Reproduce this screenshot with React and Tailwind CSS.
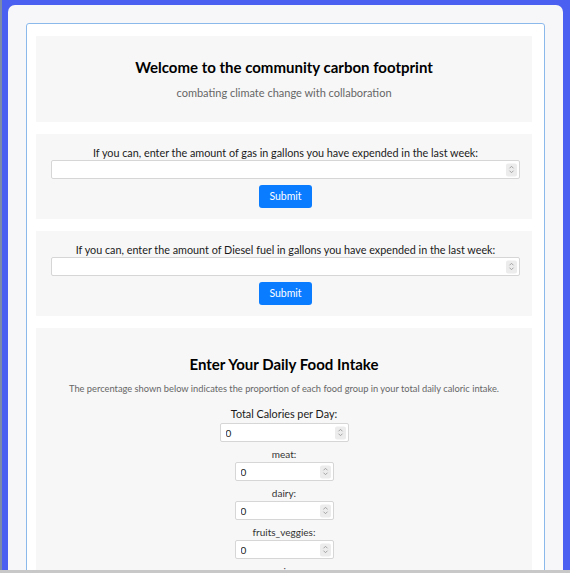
import React from "react";

function Spin() {
  return (
    <span className="pointer-events-none absolute right-[3px] top-1/2 flex h-[13px] w-[11px] -translate-y-1/2 items-center justify-center rounded-[2px] bg-[#ececec]">
      <svg width="7" height="10" viewBox="0 0 7 10" fill="none" stroke="#9a9a9a" strokeWidth="0.9">
        <path d="M1.5 3.8 L3.5 1.8 L5.5 3.8" />
        <path d="M1.5 6.2 L3.5 8.2 L5.5 6.2" />
      </svg>
    </span>
  );
}

function NumInput({ className, value = "" }) {
  return (
    <div className={"relative " + className}>
      <input
        type="text"
        defaultValue={value}
        className="block h-full w-full rounded-[2px] border border-[#d6d6d6] bg-white pl-[5px] text-[10px] text-[#222] outline-none"
      />
      <Spin />
    </div>
  );
}

function FuelSection({ label }) {
  return (
    <div className="flex h-[85px] flex-col items-center bg-[#f7f7f7] pl-[15px] pr-[12px] pt-[11px]">
      <div className="text-[10.8px] leading-[15px] text-[#1a1a1a]">{label}</div>
      <NumInput className="h-[19px] w-full" />
      <button className="mt-[6px] h-[23px] w-[53px] rounded-[3px] bg-[#0a7cff] text-[10.5px] text-white">
        Submit
      </button>
    </div>
  );
}

function FoodField({ label, wide }) {
  return (
    <div className="flex flex-col items-center">
      <div className={wide ? "text-[10.8px] leading-[16px] text-[#1a1a1a]" : "text-[10px] leading-[14px] text-[#333]"}>
        {label}
      </div>
      <NumInput value="0" className={wide ? "mt-[1px] h-[19px] w-[129px]" : "mt-[1px] h-[19px] w-[99px]"} />
    </div>
  );
}

export default function App() {
  return (
    <div
      className="flex h-[573px] w-[570px] flex-col overflow-hidden bg-[#4b5ff0]"
      style={{ fontFamily: 'Lato, "Noto Sans", sans-serif' }}
    >
      <div className="flex min-h-0 flex-1">
        <div className="w-[2px] bg-[#7d8aa8]" />
        <div className="flex min-h-0 min-w-0 flex-1 pl-[6px] pr-[7px] pt-[5px]">
          <div className="min-h-0 min-w-0 flex-1 overflow-hidden rounded-t-[7px] bg-[#f7f7f9] px-[18px] pt-[18px]">
            <div className="flex h-[600px] flex-col gap-[12px] rounded-[3px] border border-[#8cb9ec] bg-white pl-[9px] pr-[12px] pt-[12px]">
              <div className="flex h-[86px] flex-col items-center bg-[#f7f7f7] pt-[21px]">
                <div className="text-[15px] font-bold leading-[20px] text-black">
                  Welcome to the community carbon footprint
                </div>
                <div className="mt-[8px] text-[11px] leading-[15px] text-[#666]">
                  combating climate change with collaboration
                </div>
              </div>
              <FuelSection label="If you can, enter the amount of gas in gallons you have expended in the last week:" />
              <FuelSection label="If you can, enter the amount of Diesel fuel in gallons you have expended in the last week:" />
              <div className="flex flex-1 flex-col items-center bg-[#f7f7f7] pt-[26px]">
                <div className="text-[15px] font-bold leading-[20px] text-black">
                  Enter Your Daily Food Intake
                </div>
                <div className="mt-[9px] text-[9.3px] leading-[12px] text-[#666]">
                  The percentage shown below indicates the proportion of each food group in your total daily caloric intake.
                </div>
                <div className="mt-[11px] flex flex-col items-center gap-[5px]">
                  <FoodField label="Total Calories per Day:" wide />
                  <FoodField label="meat:" />
                  <FoodField label="dairy:" />
                  <FoodField label="fruits_veggies:" />
                  <FoodField label="grains:" />
                </div>
              </div>
            </div>
          </div>
        </div>
      </div>
      <div className="h-[3px] bg-[#c8c8c8]" />
    </div>
  );
}
